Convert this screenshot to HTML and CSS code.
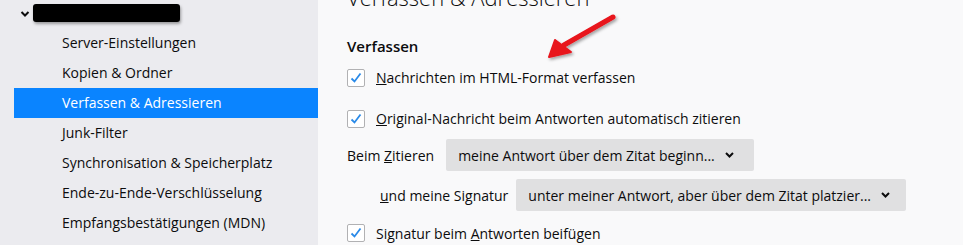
FILE: index.html
```html
<!DOCTYPE html>
<html lang="de">
<head>
<meta charset="utf-8">
<link rel="stylesheet" href="styles.css">
</head>
<body>
<div class="app">
  <nav class="sidebar">
    <div class="account">
      <svg class="twisty" width="10" height="8" viewBox="0 0 10 8"><path d="M1.5 2 L5 5.5 L8.5 2" fill="none" stroke="#0c0c0d" stroke-width="2"/></svg>
      <span class="redact"></span>
    </div>
    <ul class="nav">
      <li class="item">Server-Einstellungen</li>
      <li class="item">Kopien &amp; Ordner</li>
      <li class="item selected">Verfassen &amp; Adressieren</li>
      <li class="item">Junk-Filter</li>
      <li class="item">Synchronisation &amp; Speicherplatz</li>
      <li class="item">Ende-zu-Ende-Verschlüsselung</li>
      <li class="item">Empfangsbestätigungen (MDN)</li>
    </ul>
  </nav>
  <main class="content">
    <h1 class="title">Verfassen &amp; Adressieren</h1>
    <h2 class="section">Verfassen</h2>
    <label class="check row1">
      <span class="box"><svg width="14" height="14" viewBox="0 0 14 14"><path d="M2.5 7.5 L5.5 10.5 L11.5 2.5" fill="none" stroke="#2a8ae8" stroke-width="1.8"/></svg></span>
      <span><u>N</u>achrichten im HTML-Format verfassen</span>
    </label>
    <label class="check row2">
      <span class="box"><svg width="14" height="14" viewBox="0 0 14 14"><path d="M2.5 7.5 L5.5 10.5 L11.5 2.5" fill="none" stroke="#2a8ae8" stroke-width="1.8"/></svg></span>
      <span><u>O</u>riginal-Nachricht beim Antworten automatisch zitieren</span>
    </label>
    <div class="selrow sel1">
      <span class="sellabel">Beim <u>Z</u>itieren</span>
      <span class="select">meine Antwort über dem Zitat beginn... <svg class="chev" width="9" height="6" viewBox="0 0 9 6"><path d="M1 1 L4.5 4.5 L8 1" fill="none" stroke="#0c0c0d" stroke-width="2"/></svg></span>
    </div>
    <div class="selrow sel2">
      <span class="sellabel"><u>u</u>nd meine Signatur</span>
      <span class="select">unter meiner Antwort, aber über dem Zitat platzier... <svg class="chev" width="9" height="6" viewBox="0 0 9 6"><path d="M1 1 L4.5 4.5 L8 1" fill="none" stroke="#0c0c0d" stroke-width="2"/></svg></span>
    </div>
    <label class="check row3">
      <span class="box"><svg width="14" height="14" viewBox="0 0 14 14"><path d="M2.5 7.5 L5.5 10.5 L11.5 2.5" fill="none" stroke="#2a8ae8" stroke-width="1.8"/></svg></span>
      <span>Signatur beim <u>A</u>ntworten beifügen</span>
    </label>
    <svg class="arrow" width="100" height="70" viewBox="0 0 100 70">
      <defs>
        <filter id="sh" x="-20%" y="-20%" width="140%" height="140%">
          <feDropShadow dx="1.5" dy="2" stdDeviation="1.5" flood-color="#000" flood-opacity="0.35"/>
        </filter>
      </defs>
      <g filter="url(#sh)">
        <path d="M85 17 L36 45" stroke="#e8131b" stroke-width="5" stroke-linecap="round"/>
        <path d="M21 57 L27 40 L43 52 Z" fill="#e8131b" stroke="#e8131b" stroke-width="2" stroke-linejoin="round"/>
      </g>
    </svg>
  </main>
</div>
</body>
</html>
```
FILE: styles.css
```css
* { box-sizing: border-box; }
html, body { margin: 0; padding: 0; }
body {
  width: 963px;
  height: 245px;
  overflow: hidden;
  font-family: "Open Sans", "Noto Sans", sans-serif;
  font-size: 14px;
  color: #0c0c0d;
  background: #f9f9fa;
}
.app {
  display: flex;
  height: 245px;
}
.sidebar {
  width: 318px;
  flex: none;
  background: #ebebef;
}
.account {
  height: 28px;
  display: flex;
  align-items: center;
  padding-left: 20px;
  gap: 3px;
}
.twisty { flex: none; }
.redact {
  width: 147px;
  height: 18px;
  background: #000;
  border-radius: 3px;
  box-shadow: 1px 2px 3px rgba(0,0,0,0.35);
  margin-top: -2px;
}
.nav {
  list-style: none;
  margin: 0;
  padding: 0;
}
.item {
  height: 30px;
  line-height: 30px;
  margin-left: 14px;
  padding-left: 48px;
  white-space: nowrap;
}
.item.selected {
  background: #0a84ff;
  color: #fff;
}
.content {
  position: relative;
  flex: 1;
  padding-left: 29px;
  display: flex;
  flex-direction: column;
  align-items: flex-start;
}
.title {
  margin: -17px 0 0;
  font-size: 22px;
  font-weight: 300;
  line-height: 28px;
  height: 28px;
}
.section {
  margin: 25px 0 0;
  font-size: 15px;
  font-weight: 600;
  line-height: 20px;
  height: 20px;
}
.check {
  display: flex;
  align-items: center;
  height: 24px;
  gap: 11px;
}
.box {
  width: 18px;
  height: 18px;
  border: 1px solid #b1b1b3;
  border-radius: 2px;
  background: #fff;
  display: flex;
  align-items: center;
  justify-content: center;
  flex: none;
}
.row1 { margin-top: 10px; }
.row2 { margin-top: 17px; }
.row3 { margin-top: 10px; }
.selrow {
  display: flex;
  align-items: center;
  height: 32px;
  gap: 12px;
}
.sel1 { margin-top: 9px; }
.sel2 { margin-top: 8px; padding-left: 33px; gap: 8px; }
.select {
  height: 32px;
  display: flex;
  align-items: center;
  background: #e0e0e1;
  border-radius: 2px;
  padding: 0 20px 0 12px;
  gap: 4px;
  white-space: nowrap;
}
.sel2 .select { padding-right: 16px; }
.chev { margin-left: 6px; }
.arrow {
  position: absolute;
  left: 210px;
  top: 0;
}
```
